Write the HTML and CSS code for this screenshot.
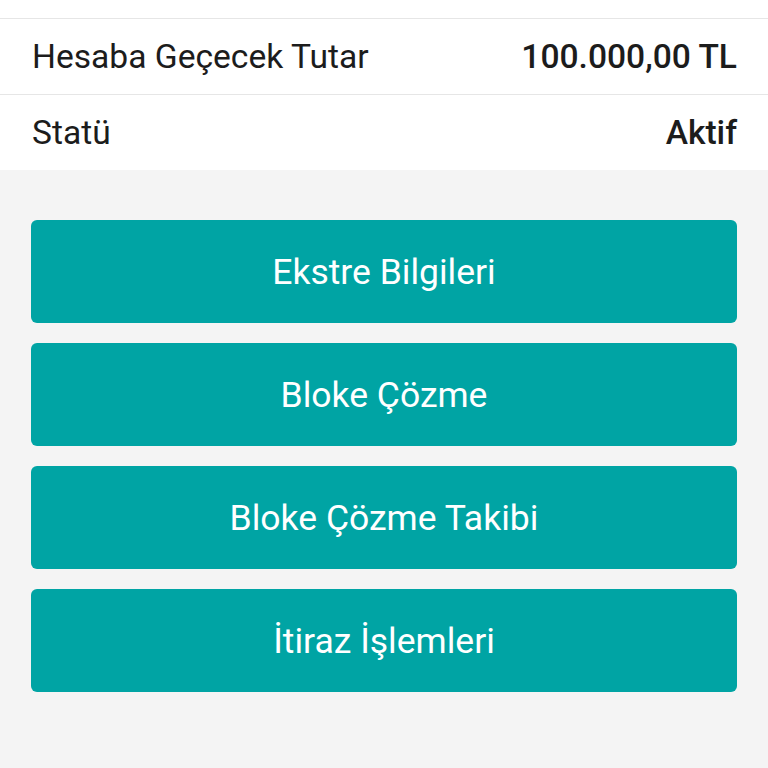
FILE: index.html
```html
<!DOCTYPE html>
<html>
<head>
    <meta charset="utf-8">
    <link rel="stylesheet" href="styles.css">
</head>
<body>
    <div class="details">
        <div class="detail-row first">
            <span class="label">Eşleşme Tipi</span>
            <span class="value">Otomatik</span>
        </div>
        <div class="detail-row">
            <span class="label">Hesaba Geçecek Tutar</span>
            <span class="value">100.000,00 TL</span>
        </div>
        <div class="detail-row">
            <span class="label">Statü</span>
            <span class="value">Aktif</span>
        </div>
    </div>

    <div class="actions">
        <button class="action-btn">Ekstre Bilgileri</button>
        <button class="action-btn">Bloke Çözme</button>
        <button class="action-btn">Bloke Çözme Takibi</button>
        <button class="action-btn">İtiraz İşlemleri</button>
    </div>
</body>
</html>
```

FILE: styles.css
```css
:root {
    --bg-color: #f4f4f4;
    --card-bg: #ffffff;
    --text-color: #1c1c1c;
    --border-color: #e6e6e6;
    --accent-color: #00a4a4;
}

html, body {
    height: 100%;
}

body {
    font-family: Roboto, 'Noto Sans', sans-serif;
    background-color: var(--bg-color);
    color: var(--text-color);
    margin: 0;
    overflow: hidden;
}

.details {
    background: var(--card-bg);
}

.detail-row {
    display: flex;
    justify-content: space-between;
    align-items: center;
    height: 75px;
    padding: 0 31px 0 32px;
    border-bottom: 1px solid var(--border-color);
    font-size: 33.6px;
}

.detail-row:last-child {
    border-bottom: none;
}

.detail-row.first {
    margin-top: -57px;
}

.value {
    font-weight: 500;
}

.actions {
    display: flex;
    flex-direction: column;
    gap: 20px;
    padding: 50px 31px;
}

.action-btn {
    height: 103px;
    background: var(--accent-color);
    color: white;
    border: none;
    border-radius: 6px;
    font-family: inherit;
    font-size: 35.5px;
    cursor: pointer;
}
```
